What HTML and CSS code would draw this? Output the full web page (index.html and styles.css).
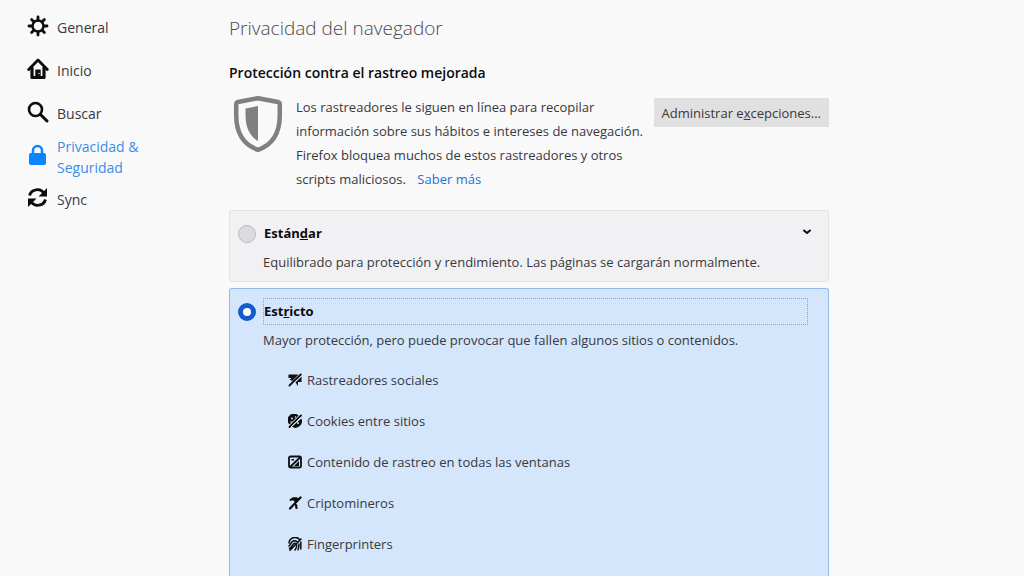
FILE: index.html
```html
<!DOCTYPE html>
<html lang="es">
<head>
    <meta charset="UTF-8">
    <meta name="viewport" content="width=device-width, initial-scale=1.0">
    <title>Privacidad del navegador</title>
    <link rel="stylesheet" href="styles.css">
</head>
<body>

    <nav class="sidebar">
        <a class="category" href="#general">
            <svg class="category-icon" viewBox="0 0 22 22">
                <g stroke="currentColor" stroke-width="2.800" stroke-linecap="round">
                    <path d="M11 2v3M11 17v3M2 11h3M17 11h3M4.600 4.600l2 2M15.400 15.400l2 2M4.600 17.400l2-2M15.400 6.600l2-2"/>
                </g>
                <circle cx="11" cy="11" r="5.500" fill="none" stroke="currentColor" stroke-width="2.400"/>
            </svg>
            <span>General</span>
        </a>
        <a class="category" href="#inicio">
            <svg class="category-icon" viewBox="0 0 22 22" fill="none" stroke="currentColor" stroke-linejoin="round" stroke-linecap="round">
                <path stroke-width="2.800" d="M1.700 11.500L11 2l9.300 9.500"/>
                <path stroke-width="3.200" d="M5 10v9.500h12V10"/>
                <path fill="currentColor" stroke="none" d="M8.300 11.500h5.400v8H8.300z"/>
                <circle cx="12" cy="15.500" r=".7" fill="#f9f9fa" stroke="none"/>
            </svg>
            <span>Inicio</span>
        </a>
        <a class="category" href="#buscar">
            <svg class="category-icon" viewBox="0 0 22 22" fill="none" stroke="currentColor" stroke-linecap="round">
                <circle cx="8.500" cy="8.500" r="6.500" stroke-width="2.600"/>
                <path stroke-width="3" d="M13.500 13.500l6.500 6.500"/>
            </svg>
            <span>Buscar</span>
        </a>
        <a class="category selected" href="#privacidad">
            <svg class="category-icon" viewBox="0 0 22 22">
                <rect x="2" y="9" width="17" height="12" rx="2" fill="currentColor"/>
                <path fill="none" stroke="currentColor" stroke-width="2.500" d="M6 10V6.500a4.500 4.500 0 0 1 9 0V10"/>
            </svg>
            <span>Privacidad &amp; Seguridad</span>
        </a>
        <a class="category" href="#sync">
            <svg class="category-icon" viewBox="0 0 22 22">
                <path fill="none" stroke="currentColor" stroke-width="2.800" d="M2.500 8.500A8 8 0 0 1 17 6.500M18.500 12.500A8 8 0 0 1 4 14.500"/>
                <path fill="currentColor" d="M20 1v8.500h-8.500zM1 20v-8.500h8.500z"/>
            </svg>
            <span>Sync</span>
        </a>
    </nav>

    <main class="pane">
        <h1>Privacidad del navegador</h1>
        <h2>Protección contra el rastreo mejorada</h2>

        <section class="tracking">
            <svg class="shield" viewBox="0 0 50 58">
                <path fill="none" stroke="#808080" stroke-width="4.500" stroke-linejoin="round" d="M25 3.200L45 7Q46.800 7.500 46.800 9.500V20C46.800 38 39 50 25 54.800C11 50 3.200 38 3.200 20V9.500Q3.200 7.500 5 7z"/>
                <path fill="#808080" d="M25 11v35C16 41 12.500 31 12.500 20v-6.500z"/>
            </svg>
            <p class="tracking-text">Los rastreadores le siguen en línea para recopilar información sobre sus hábitos e intereses de navegación. Firefox bloquea muchos de estos rastreadores y otros scripts maliciosos. <a class="learn-more" href="#saber-mas">Saber más</a></p>
            <button class="exceptions" type="button">Administrar e<u>x</u>cepciones...</button>
        </section>

        <section class="option">
            <div class="option-head">
                <input type="radio" name="blocking" id="standard">
                <label for="standard">Están<u>d</u>ar</label>
                <button class="expander" type="button" aria-label="Mostrar detalles">
                    <svg viewBox="0 0 10 6"><path fill="none" stroke="currentColor" stroke-width="2" stroke-linecap="round" stroke-linejoin="round" d="M2 1.500l3 2.500 3-2.500"/></svg>
                </button>
            </div>
            <p class="option-text">Equilibrado para protección y rendimiento. Las páginas se cargarán normalmente.</p>
        </section>

        <section class="option active">
            <div class="option-head">
                <input type="radio" name="blocking" id="strict" checked>
                <label for="strict">Est<u>r</u>icto</label>
            </div>
            <p class="option-text">Mayor protección, pero puede provocar que fallen algunos sitios o contenidos.</p>
            <ul class="blocked">
                <li>
                    <svg viewBox="0 0 14 14">
                        <path fill="currentColor" d="M.5 1.500h10L3.500 8.500v-1.500H1.500L3.500 5H.5zM13.500 3.500V9H10v4L7.500 9.500z"/>
                        <path stroke="currentColor" stroke-width="1.800" stroke-linecap="round" d="M1.500 12.500L12.800 1.500"/>
                        <path stroke="#d4e6fc" stroke-width=".8" d="M3.800 12L13.500 2.700"/>
                    </svg>
                    <span>Rastreadores sociales</span>
                </li>
                <li>
                    <svg viewBox="0 0 14 14">
                        <path fill="currentColor" d="M10.500 1.500A6.300 6.300 0 0 0 1.500 10.500zM13.300 4.500A6.500 6.500 0 0 1 4 12.800z"/>
                        <path stroke="currentColor" stroke-width="1.800" stroke-linecap="round" d="M1.500 13L13 1.500"/>
                        <g fill="#d4e6fc">
                            <circle cx="4" cy="4.500" r="1"/>
                            <circle cx="7.500" cy="3" r=".8"/>
                            <circle cx="3" cy="8" r=".8"/>
                            <circle cx="10" cy="9" r="1"/>
                        </g>
                        <path stroke="#d4e6fc" stroke-width="1" d="M3 13L13 3"/>
                    </svg>
                    <span>Cookies entre sitios</span>
                </li>
                <li>
                    <svg viewBox="0 0 14 14">
                        <rect x="1" y="1.500" width="12" height="11" rx="1.500" fill="none" stroke="currentColor" stroke-width="1.800"/>
                        <path stroke="currentColor" stroke-width="1.800" d="M2 12L12 2.500"/>
                        <path fill="currentColor" d="M6 11l5-5v5zM3.500 4h2.500v1.500H3.500z"/>
                    </svg>
                    <span>Contenido de rastreo en todas las ventanas</span>
                </li>
                <li>
                    <svg viewBox="0 0 14 14">
                        <path fill="currentColor" d="M1.500 3.500L5 1.200h4l1 1.200L12.500 1l.5 1-5 5-3-2.800L2 5z"/>
                        <path stroke="currentColor" stroke-width="2.200" stroke-linecap="round" d="M2 12.500L12.500 1.500M8 9l.5 3"/>
                    </svg>
                    <span>Criptomineros</span>
                </li>
                <li>
                    <svg viewBox="0 0 14 14" fill="none" stroke="currentColor" stroke-width="1.500" stroke-linecap="round">
                        <path d="M1 6A6 6 0 0 1 11.500 2.500M1 9C3 8 2.500 4 6.500 3.800Q8 3.800 9 4.500M1.500 11.500C5 9.500 4 6.500 7 6.200M2 13.300L13 2M7 13Q8.500 11 8.800 8M10 12.800Q11 10 11 7M12.700 12Q13 9 12.800 5"/>
                    </svg>
                    <span>Fingerprinters</span>
                </li>
            </ul>
        </section>
    </main>

</body>
</html>
```

FILE: styles.css
```css
body {
    display: flex;
    margin: 0;
    min-height: 100vh;
    background-color: #f9f9fa;
    color: #38383d;
    font-family: "Open Sans", "Noto Sans", sans-serif;
    font-size: 13px;
    line-height: 24px;
}

h1, h2, p, ul {
    margin: 0;
    padding: 0;
}

.sidebar {
    flex: 0 0 175px;
    padding: 6px 27px;
}

.category {
    display: flex;
    align-items: center;
    gap: 8px;
    height: 43px;
    color: #38383d;
    font-size: 14px;
    line-height: 21px;
    text-decoration: none;
}

.category-icon {
    flex: none;
    width: 22px;
    height: 22px;
    margin-bottom: 3px;
    color: #0c0c0d;
}

.category.selected, .category.selected .category-icon {
    color: #0a84ff;
}

.category.selected span {
    color: #3a8ee6;
}

.pane {
    display: flex;
    flex-direction: column;
    flex: 1;
    max-width: 600px;
}

h1 {
    margin-top: 12px;
    color: #4a4a4f;
    font-size: 19px;
    font-weight: 300;
    line-height: 32px;
}

h2 {
    margin-top: 17px;
    color: #0c0c0d;
    font-size: 14px;
    font-weight: 600;
    line-height: 24px;
}

.tracking {
    display: flex;
    align-items: flex-start;
    margin-top: 10px;
    margin-bottom: 19px;
}

.shield {
    flex: none;
    width: 50px;
    height: 58px;
    margin: 0 13px 0 4px;
}

.tracking-text {
    flex: 1;
}

.learn-more {
    margin-left: 8px;
    color: #2a6fd6;
    text-decoration: none;
}

.exceptions {
    flex: none;
    height: 29px;
    margin: 3px 0 0;
    padding: 0 8px;
    border: none;
    background-color: #e0e0e1;
    color: #38383d;
    font: inherit;
}

.option {
    margin-bottom: 6px;
    padding: 9px 20px 7px 8px;
    border: 1px solid #e3e3e6;
    border-radius: 3px;
    background-color: #f1f1f3;
}

.option.active {
    flex: 1;
    margin-bottom: 0;
    border-color: #93bcea;
    border-bottom: none;
    border-radius: 3px 3px 0 0;
    background-color: #d4e6fc;
}

.option-head {
    display: flex;
    align-items: center;
    position: relative;
}

.option-head input {
    appearance: none;
    flex: none;
    width: 18px;
    height: 18px;
    margin: 0 7px 0 0;
    border: 1px solid #bcbcc0;
    border-radius: 50%;
    background-color: #dcdcde;
}

.option-head input:checked {
    border: 5px solid #155bd0;
    background-color: white;
}

.option-head label {
    flex: 1;
    border: 1px solid transparent;
    color: #0c0c0d;
    font-weight: 700;
    line-height: 25px;
}

.option-head input:checked + label {
    border: 1px dotted #8fa3bb;
}

.expander {
    position: absolute;
    top: 5px;
    right: -6px;
    width: 14px;
    height: 14px;
    padding: 2px;
    border: none;
    background: none;
    color: #0c0c0d;
}

.expander svg {
    display: block;
    width: 10px;
    height: 6px;
}

.option-text {
    margin-top: 3px;
    padding-left: 25px;
}

.blocked {
    display: flex;
    flex-direction: column;
    gap: 17px;
    margin-top: 16px;
    padding-left: 50px;
    list-style: none;
}

.blocked li {
    display: flex;
    align-items: center;
    gap: 5px;
}

.blocked svg {
    flex: none;
    width: 14px;
    height: 14px;
    color: #0c0c0d;
}
```
